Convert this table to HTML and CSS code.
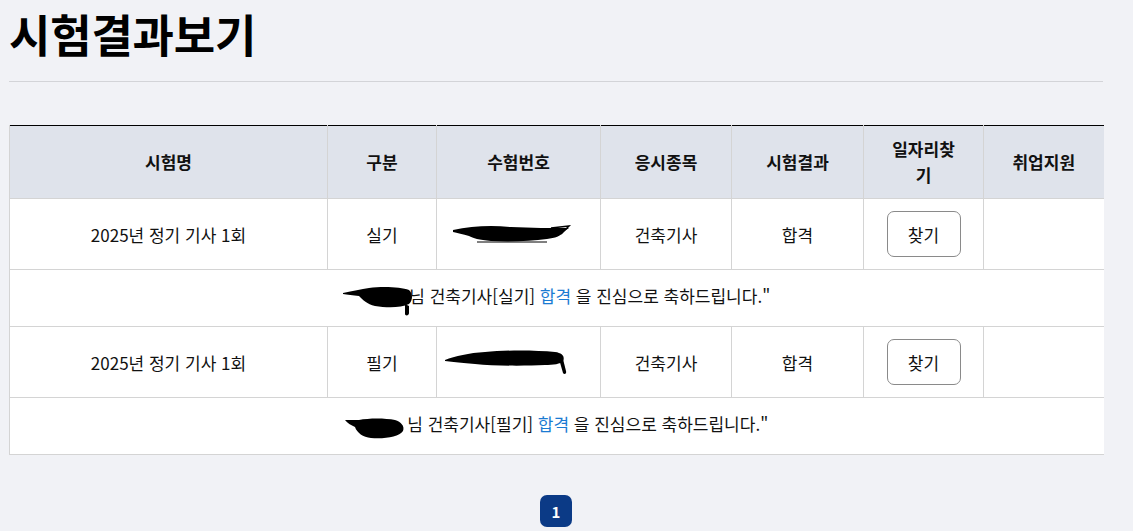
FILE: index.html
```html
<!DOCTYPE html>
<html lang="ko">
<head>
<meta charset="utf-8">
<title>시험결과보기</title>
<link rel="stylesheet" href="styles.css">
</head>
<body>
<div class="wrap">
  <h1 class="title">시험결과보기</h1>
  <hr class="rule">
  <table class="result">
    <colgroup>
      <col class="c1"><col class="c2"><col class="c3"><col class="c4"><col class="c5"><col class="c6"><col class="c7">
    </colgroup>
    <thead>
      <tr>
        <th>시험명</th><th>구분</th><th>수험번호</th><th>응시종목</th><th>시험결과</th><th>일자리찾기</th><th>취업지원</th>
      </tr>
    </thead>
    <tbody>
      <tr class="data">
        <td>2025년 정기 기사 1회</td>
        <td>실기</td>
        <td class="numcell"><svg class="redact r1" width="122" height="24" viewBox="0 0 122 24"><path d="M2 8 C20 4 40 3 60 5 C80 6 100 6 118 6 L112 10 C110 14 104 16 96 17 C80 19 60 20 40 19 C28 18 22 16 18 14 C12 12 6 11 2 10 Z" fill="#000"/><path d="M100 6 L118 4 L110 12" stroke="#000" stroke-width="1.5" fill="none"/><path d="M26 20 L96 20" stroke="#000" stroke-width="1"/></svg></td>
        <td>건축기사</td>
        <td>합격</td>
        <td><button class="find" type="button">찾기</button></td>
        <td></td>
      </tr>
      <tr class="msg">
        <td colspan="7"><svg class="redact r2" width="72" height="30" viewBox="0 0 72 30"><path d="M0 7 C10 5 18 3 26 2 C40 0 58 1 66 4 C70 8 70 14 66 18 C58 22 44 22 32 20 C24 18 20 14 16 10 C10 9 4 9 0 8 Z" fill="#000"/><path d="M62 18 L62 28 C62 30 66 30 66 27 L66 20" fill="#000"/></svg>님 건축기사[실기] <span class="pass">합격</span> 을 진심으로 축하드립니다."</td>
      </tr>
      <tr class="data">
        <td>2025년 정기 기사 1회</td>
        <td>필기</td>
        <td class="numcell"><svg class="redact r3" width="124" height="26" viewBox="0 0 124 26"><path d="M0 11 C10 7 24 4 40 3 C60 1 90 1 110 3 C118 4 120 8 118 12 C116 15 108 16 100 16 C80 17 50 17 30 15 C18 14 8 13 0 12 Z" fill="#000"/><path d="M114 10 L118 24 C119 26 122 25 121 22 L118 10" fill="#000"/></svg></td>
        <td>건축기사</td>
        <td>합격</td>
        <td><button class="find" type="button">찾기</button></td>
        <td></td>
      </tr>
      <tr class="msg">
        <td colspan="7"><svg class="redact r4" width="62" height="24" viewBox="0 0 62 24"><path d="M0 3 L14 3 C24 1 40 1 50 3 C56 5 60 9 58 14 C54 20 40 22 26 21 C18 20 12 16 10 10 C6 8 2 6 0 3 Z" fill="#000"/></svg>님 건축기사[필기] <span class="pass">합격</span> 을 진심으로 축하드립니다."</td>
      </tr>
    </tbody>
  </table>
  <nav class="pager">
    <a class="page current" href="#">1</a>
  </nav>
</div>
</body>
</html>
```

FILE: styles.css
```css
* { box-sizing: border-box; }
html, body { margin: 0; padding: 0; }
body {
  background: #f1f2f6;
  font-family: "Noto Sans CJK KR", "Noto Sans", sans-serif;
  color: #111;
}
.wrap {
  width: 1103px;
  padding-left: 9px;
}
.title {
  margin: 0;
  padding-top: 4px;
  font-size: 45px;
  line-height: 60px;
  font-weight: 700;
  letter-spacing: -0.2px;
  color: #000;
}
.rule {
  margin: 17px 0 0 0;
  border: 0;
  border-top: 1px solid #d3d4d8;
  height: 0;
}
.result {
  margin-top: 43px;
  width: 1094px;
  border-collapse: collapse;
  table-layout: fixed;
  background: #fff;
  border-top: 1px solid #000;
  font-size: 17px;
}
.c1 { width: 318px; }
.c2 { width: 109px; }
.c3 { width: 164px; }
.c4 { width: 131px; }
.c5 { width: 132px; }
.c6 { width: 120px; }
.c7 { width: 120px; }
.result th {
  background: #dfe3eb;
  font-weight: 700;
  height: 73px;
  padding: 0 24px;
  line-height: 26px;
  border-left: 1px solid #d4d4d4;
  border-bottom: 1px solid #d4d4d4;
  text-align: center;
}
.result td {
  text-align: center;
  border-left: 1px solid #d4d4d4;
  border-bottom: 1px solid #d4d4d4;
  padding: 0 8px;
}
.data td { height: 71px; }
.msg td { height: 57px; }
.numcell { text-align: left !important; }
.redact { vertical-align: middle; }
.r1 { margin-left: 6px; margin-top: -6px; }
.r2 { margin-right: -6px; margin-top: 6px; }
.r3 { margin-left: 0; margin-top: -4px; }
.r4 { margin-right: 0; margin-top: 4px; }
.pass { color: #1b7bd2; }
.find {
  font-family: inherit;
  font-size: 17px;
  color: #111;
  background: #fff;
  border: 1px solid #8a8a8a;
  border-radius: 7px;
  width: 74px;
  height: 46px;
  padding: 0;
  cursor: pointer;
}
.pager {
  display: flex;
  justify-content: center;
  margin-top: 40px;
}
.page {
  display: flex;
  align-items: center;
  justify-content: center;
  width: 32px;
  height: 32px;
  border-radius: 7px;
  background: #0b3a86;
  color: #fff;
  font-weight: 700;
  font-size: 15px;
  text-decoration: none;
}
```
